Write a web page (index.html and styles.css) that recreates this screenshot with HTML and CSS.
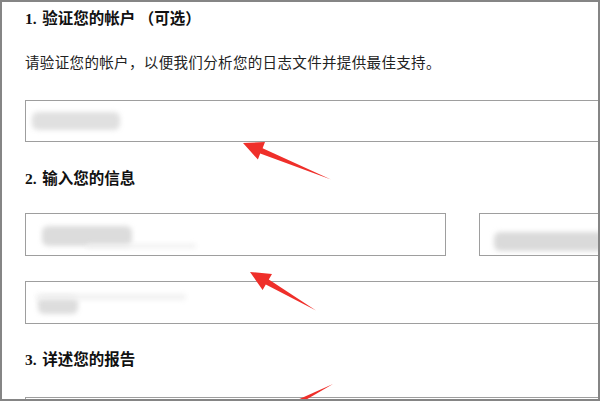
FILE: index.html
```html
<!DOCTYPE html>
<html lang="zh">
<head>
<meta charset="utf-8">
<link rel="stylesheet" href="styles.css">
</head>
<body>
<div class="frame">
  <div class="content">
    <h2 class="heading h1"><span class="num">1.</span> 验证您的帐户 （可选）</h2>
    <p class="intro">请验证您的帐户，以便我们分析您的日志文件并提供最佳支持。</p>
    <div class="field wide f1"><span class="blur b1"></span></div>
    <h2 class="heading h2"><span class="num">2.</span> 输入您的信息</h2>
    <div class="row">
      <div class="field half"><span class="blur b2"></span><span class="blur b2t"></span></div>
      <div class="field rest"><span class="blur b3"></span></div>
    </div>
    <div class="field wide f4"><span class="blur b4"></span><span class="blur b4t"></span></div>
    <h2 class="heading h3"><span class="num">3.</span> 详述您的报告</h2>
    <div class="field wide f5"></div>
  </div>
  <svg class="arrows" width="600" height="401" viewBox="0 0 600 401">
    <polygon points="243,143 265,142 262.6,148.2 331,179.5 260.2,153.6 257.9,159.5" />
    <polygon points="250,272 272,274 268.8,279.6 316,310.5 265.8,284.6 262.6,290" />
    <polygon points="333,384 286,405 297,405" />
  </svg>
</div>
</body>
</html>
```

FILE: styles.css
```css
html, body {
  margin: 0;
  padding: 0;
  background: #fff;
}
.frame {
  position: relative;
  width: 600px;
  height: 401px;
  box-sizing: border-box;
  border: 2px solid #858585;
  overflow: hidden;
  font-family: "Noto Sans CJK SC", "Liberation Serif", sans-serif;
  color: #1a1a1a;
}
.content {
  padding-left: 23px;
  display: flex;
  flex-direction: column;
  align-items: flex-start;
}
.heading {
  margin: 0;
  height: 20px;
  font-size: 15.5px;
  font-weight: bold;
  line-height: 20px;
  color: #111;
  white-space: nowrap;
}
.num {
  font-family: "Liberation Serif", serif;
  font-size: 15.5px;
  line-height: 1;
  margin-right: 2px;
}
.h1 { margin-top: 5px; }
.h2 { margin-top: 25px; }
.h3 { margin-top: 24px; }
.intro {
  margin: 25px 0 0;
  height: 20px;
  font-size: 14.5px;
  letter-spacing: 0.35px;
  line-height: 20px;
  color: #222;
  white-space: nowrap;
}
.field {
  position: relative;
  box-sizing: border-box;
  border: 1px solid #9e9e9e;
  background: #fff;
  flex-shrink: 0;
}
.wide { width: 640px; }
.f1 { margin-top: 28px; height: 42px; }
.row {
  display: flex;
  gap: 33px;
  margin-top: 26px;
}
.half { width: 421px; height: 43px; }
.rest { width: 200px; height: 43px; }
.f4 { margin-top: 25px; height: 43px; }
.f5 { margin-top: 29px; height: 40px; }
.blur {
  position: absolute;
  display: block;
  background: #d8d8d8;
  border-radius: 6px;
  filter: blur(2.5px);
}
.b1 { left: 6px; top: 11px; width: 88px; height: 18px; background: #e0e0e0; }
.b2 { left: 16px; top: 12px; width: 90px; height: 20px; background: #dcdcdc; }
.b2t { left: 60px; top: 30px; width: 110px; height: 4px; background: #efefef; }
.b3 { left: 14px; top: 18px; width: 110px; height: 19px; background: #dadada; }
.b4 { left: 12px; top: 14px; width: 40px; height: 18px; background: #dddddd; }
.b4t { left: 10px; top: 12px; width: 150px; height: 6px; background: #f1f1f1; }
.arrows {
  position: absolute;
  left: -2px;
  top: -2px;
  fill: #ef2f2a;
  pointer-events: none;
}
```
